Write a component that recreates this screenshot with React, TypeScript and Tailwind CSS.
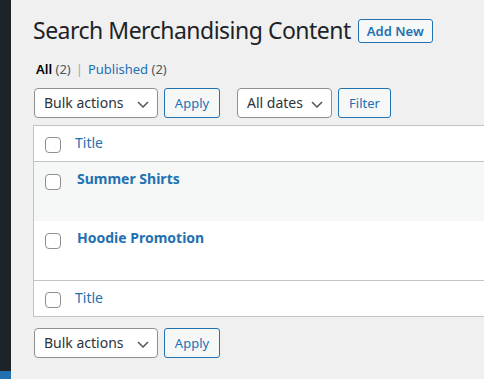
import { Fragment } from 'react';

const font = 'font-["Noto_Sans",sans-serif]';

const Chevron = () => (
  <svg className="absolute right-[8px] top-[12px]" width="12" height="7" viewBox="0 0 12 7" fill="none">
    <path d="M1 1l5 5 5-5" stroke="#50575e" strokeWidth="1.5" />
  </svg>
);

const Select = ({ label, width }: { label: string; width: string }) => (
  <div className={`relative h-[30px] ${width} rounded-[4px] border border-[#8c8f94] bg-white pl-[9px] text-[14px] leading-[28px] text-[#2c3338]`}>
    {label}
    <Chevron />
  </div>
);

const Button = ({ label, width }: { label: string; width: string }) => (
  <button className={`h-[30px] ${width} rounded-[3px] border border-[#2271b1] bg-[#f6f7f7] text-[13px] leading-[28px] text-[#2271b1]`}>
    {label}
  </button>
);

const Checkbox = () => (
  <span className="block h-[16px] w-[16px] rounded-[4px] border border-[#8c8f94] bg-white" />
);

const rows = [
  { id: 1, title: 'Summer Shirts' },
  { id: 2, title: 'Hoodie Promotion' },
];

const HeaderRow = ({ border }: { border: string }) => (
  <div className={`flex h-[36px] ${border} border-[#c3c4c7]`}>
    <div className="w-[41px] pl-[11px] pt-[11px]">
      <Checkbox />
    </div>
    <span className="pt-[7px] text-[14px] leading-[20px] text-[#2271b1]">Title</span>
  </div>
);

export default function App() {
  return (
    <div className={`flex h-[379px] w-[484px] overflow-hidden bg-[#f0f0f1] ${font}`}>
      <div className="flex w-[11px] shrink-0 flex-col justify-end bg-[#1d2327]">
        <div className="h-[8px] bg-[#2271b1]" />
      </div>

      <div className="flex-1 pl-[22px]">
        {/* Heading */}
        <div className="flex items-start">
          <h1 className="mt-[15px] whitespace-nowrap text-[23px] font-normal leading-[30px] tracking-[-0.5px] text-[#1d2327]">
            Search Merchandising Content
          </h1>
          <button className="ml-[7px] mt-[19px] h-[24px] shrink-0 rounded-[3px] border border-[#2271b1] bg-[#f6f7f7] px-[8px] text-[13px] font-semibold leading-[22px] text-[#2271b1]">
            Add New
          </button>
        </div>

        {/* Status links */}
        <div className="mt-[14px] pl-[3px] text-[13px] leading-[20px] text-[#50575e]">
          <span className="font-semibold text-black">All</span> (2)
          <span className="mx-[5px] text-[#a7aaad]">|</span>
          <span className="text-[#2271b1]">Published</span> (2)
        </div>

        {/* Top filters */}
        <div className="mt-[9px] flex items-center pl-px">
          <Select label="Bulk actions" width="w-[124px]" />
          <div className="ml-[6px]">
            <Button label="Apply" width="w-[56px]" />
          </div>
          <div className="ml-[17px]">
            <Select label="All dates" width="w-[95px]" />
          </div>
          <div className="ml-[6px]">
            <Button label="Filter" width="w-[53px]" />
          </div>
        </div>

        {/* Table */}
        <div className="mt-[7px] w-[600px] border border-[#c3c4c7] bg-white">
          <HeaderRow border="border-b" />
          {rows.map((row, i) => (
            <Fragment key={row.id}>
              <div className={`flex h-[59px] ${i % 2 === 0 ? 'bg-[#f6f7f7]' : 'bg-white'}`}>
                <div className="w-[43px] pl-[11px] pt-[12px]">
                  <Checkbox />
                </div>
                <span className="pt-[7px] text-[14px] font-bold leading-[20px] text-[#2271b1]">{row.title}</span>
              </div>
            </Fragment>
          ))}
          <HeaderRow border="border-t" />
        </div>

        {/* Bottom filters */}
        <div className="mt-[11px] flex items-center pl-px">
          <Select label="Bulk actions" width="w-[124px]" />
          <div className="ml-[6px]">
            <Button label="Apply" width="w-[56px]" />
          </div>
        </div>
      </div>
    </div>
  );
}
